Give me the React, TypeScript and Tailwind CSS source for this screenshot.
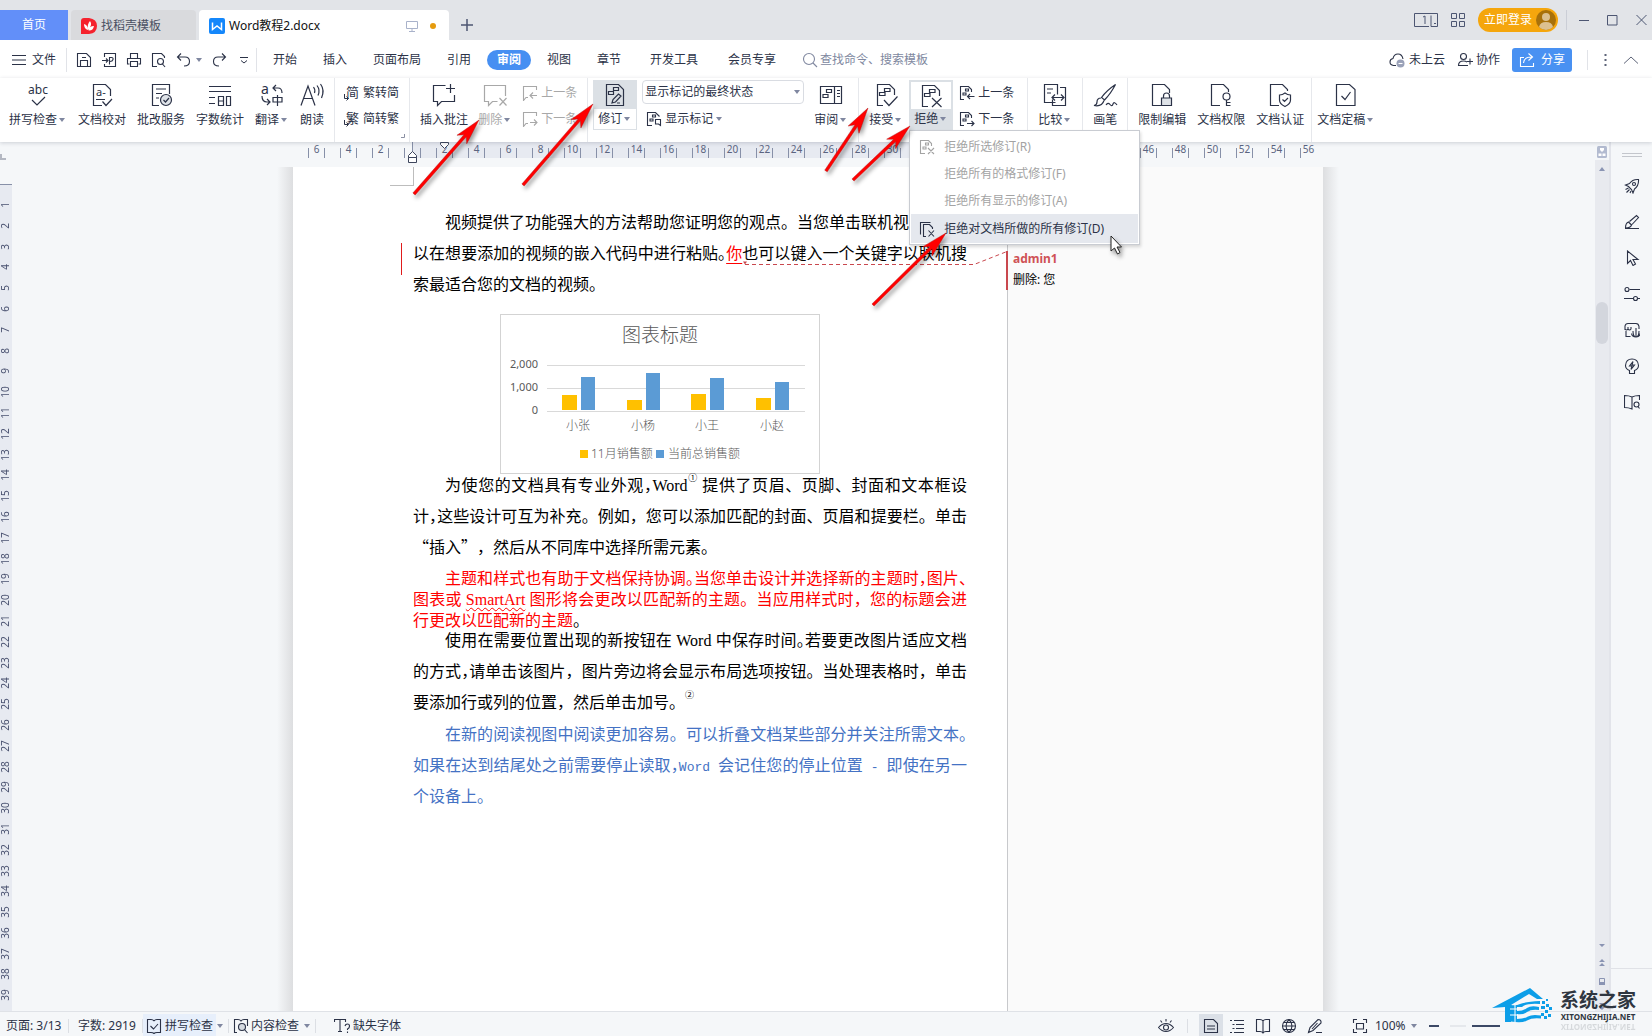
import type { ReactNode } from "react";

const ink = "#2b3247";

/* ---------- icons ---------- */

const docCut = "M9 22.5H3.5V1.5h12l5 5V12";
const marks = "M10.5 5.5h5.5v3h-5.5zM5.5 9.5H11v3H5.5z";

const big: Record<string, ReactNode> = {
  spell: (
    <>
      <text x="12" y="11" textAnchor="middle" fontSize="12" fill={ink} stroke="none">abc</text>
      <path d="M6 17l5 5 8-8" />
    </>
  ),
  proof: (
    <>
      <path d="M12 22.5H3.5V1.5h12l5 5V13M6 16.5h9M12.5 18.5l3.5 4 6-6.5" />
      <text x="6" y="13" fontSize="11" fill={ink} stroke="none">a-</text>
    </>
  ),
  correct: (
    <>
      <path d="M10 22.5H3.5V1.5h17V11M7 6h10M7 10.5h6M7 15h3" />
      <circle cx="17" cy="17" r="5.5" fill="#dfe3e8" />
      <path d="M14.5 17l2 2 3.5-4" />
    </>
  ),
  count: <path d="M1 3.5h22M1 8.5h22M1 14.5h6M1 20.5h6M10.5 13.5h5v9h-5zM10.5 18h5M18.5 13.5h4v9h-4z" />,
  translate: (
    <>
      <text x="1" y="11" fontSize="14" fill={ink} stroke="none">a</text>
      <path d="M16 2l-3 3 3 3M13 5h5q4 0 4 5M2 13q0 6 5 6h3M7 16l3 3-3 3M13 14.5h9v4.5h-9zM17.5 12v11" />
    </>
  ),
  read: <path d="M1 22.5L8 3l7 19.5M3.500 15.500h9M13.500 4q2 2.500 1 6M17 2.500q3.500 4.500 1 10M20.500 1q4.500 6 1 14" />,
  comment: <path d="M13.500 2.500h-12v16h4v4l4-4h13V12M18.500 1v9M14 5.500h9" />,
  delComment: <path d="M22.500 13V2.500h-21v16h4v4l4-4h5M16.500 15l7 7.500M23.500 15l-7 7.500" />,
  track: (
    <>
      <path d="M3.500 1.500h12l5 5v16h-17z" />
      <path d="M10.500 4.500h5v3h-5zM5.500 8.500h5v3h-5zM9 20l1-3.500 5.500-5.500 2.500 2-5.500 6zM14 20h3" />
    </>
  ),
  pane: <path d="M1.500 3.500h21v17h-21zM15.500 3.500v17M7.500 6.500h5v3h-5zM4 11.500h5v3H4zM18 7.500h3M18 10.500h3M18 13.500h3" />,
  accept: (
    <>
      <path d={docCut} />
      <path d={marks} />
      <path d="M10 17l5 5.500 8.500-9" />
    </>
  ),
  reject: (
    <>
      <path d={docCut} />
      <path d={marks} />
      <path d="M13 14l9.500 9M22.500 14l-9.500 9" />
    </>
  ),
  compare: <path d="M12.500 19.500h-11v-18h13v10M17 4.500h5.500v18h-13v-6M4 6h6M4 10h4M9 14.500h12M12 11.500l-3 3 3 3M18 11.500l3 3-3 3" />,
  brush: <path d="M22.500 1.500q-9 6-14 13l3 2.500q6-6 11-15.500zM8 15q-4 0-4 4 0 3-3 3.500 8 1.500 10-5M13 22q2-3 4-.5t3-.5 4 1" />,
  lock: (
    <>
      <path d="M11 22.500H2.500v-21h12l5 5V10" />
      <path d="M13.500 15v-2q0-3 3-3t3 3v2" />
      <path d="M11.500 15h10v7.500h-10z" fill="#dfe3e8" />
    </>
  ),
  key: (
    <>
      <path d="M11 22.500H2.500v-21h12l5 5V9" />
      <circle cx="17.500" cy="13.500" r="3.500" />
      <path d="M17.500 17v6M17.500 19.500h4M17.500 22.500h4" />
    </>
  ),
  shield: <path d="M11 22.500H2.500v-21h12l5 5V8M17 10q2.500 2 5.500 2v5q0 4-5.500 6.500-5.500-2.500-5.500-6.500v-5q3 0 5.500-2zM14.500 16.500l2 2 3.500-3.500" />,
  final: <path d="M2.500 1.500h13l5.500 5v16H2.500zM7.500 13l3.500 3.500L16.500 9" />,
};

const small: Record<string, ReactNode> = {
  save: <path d="M1.500 1.500h9l4 4v9h-13zM4.500 14V8.500h7V14M6 5.500h4" />,
  exportFile: <path d="M3.500 5V1.500h11v13h-11V12M1 8.500h6M5 6.500l2 2-2 2M8.500 12.500v-7h2q2 0 1.500 2T9 9.500" />,
  print: <path d="M4.500 6V1.500h7V6M3.500 12h-2V6.500h13V12h-2M4.500 9.500h7v5h-7z" />,
  preview: (
    <>
      <path d="M6 14.500H1.500v-13h9l3 3V6" />
      <circle cx="9.500" cy="9.500" r="3" />
      <path d="M11.500 12l2.500 3" />
    </>
  ),
  undo: <path d="M5 1.500L1.500 5 5 8.500M2 5h7q4.500 0 4.500 4.500T8 14" />,
  redo: <path d="M11 1.500L14.500 5 11 8.500M14 5H7q-4.500 0-4.500 4.500T8 14" />,
  search: (
    <>
      <circle cx="7" cy="7" r="5.500" />
      <path d="M11 11l4 4" />
    </>
  ),
  prev: <path d="M6 12.500H4l-2.500 3V1.500h13V5M15 10.500H8M11 7.500l-3 3 3 3" />,
  next: <path d="M6 12.500H4l-2.500 3V1.500h13V5M8 11.500h7M12 8.500l3 3-3 3" />,
  revPrev: <path d="M5 14.500H1.500v-13h8l3 3V7M6.500 4h3v2h-3zM4 8h3v2H4zM15.500 11.500H8.500M11 9l-2.500 2.500L11 14" />,
  revNext: <path d="M5 14.500H1.500v-13h8l3 3V7M6.500 4h3v2h-3zM4 8h3v2H4zM8 12.500h7M12.500 10l2.500 2.500-2.500 2.500" />,
  showMarks: <path d="M6 14.500H1.500v-13h8l4 4M6.500 4h3v2h-3zM4 8h3v2H4zM9.500 8.500h5v6l-2-1.500h-3z" />,
  rejectSel: <path d="M6 14.500H1.500v-13h8l3 3V7M6.500 4h3v2h-3zM4 8h3v2H4zM9 9l6 6M15 9l-6 6" />,
  rejectAll: <path d="M1.500 13.500v-12h10M7 15.500H4.500v-12h6l3 3V8M9.500 9.500l5.500 6M15 9.500l-5.500 6" />,
  cloud: (
    <>
      <path d="M7 13.500H4.500Q1 13 1 10t3-3.500Q5 2 9 2t5 5" />
      <circle cx="11.500" cy="11.500" r="4" fill="#9aa1b8" stroke="none" />
      <path d="M9.500 11.500h4" stroke="#fff" />
    </>
  ),
  person: (
    <>
      <circle cx="6.500" cy="4.500" r="3" />
      <path d="M11 13.500H1.500q0-4.500 5-4.500 2 0 3.500 1M13 6.500v6M10 9.500h6" />
    </>
  ),
  share: <path d="M5 5.500H1.500v9h13V11M4.500 11q.5-6 8-6M9.500 1.500L13.500 5 9.500 8.500" />,
  checkBook: <path d="M8 3Q7 1.500 5 1.500H1.500v13H5q2 0 3 1 1-1 3-1h3.500v-13H11Q9 1.500 8 3M4.500 8l3 3L12 6" />,
  findBook: (
    <>
      <path d="M4 14.500H1.500v-13H5q2 0 3 1.500 1-1.500 3-1.500h3.500V8" />
      <circle cx="9" cy="9" r="3.500" fill="#d5dae1" />
      <path d="M11.500 11.500l3 3.500" />
    </>
  ),
  missingFont: <path d="M.500 4V1.500h11V4M6 1.500v12M4 13.500h4M11 8q.5-2 2.500-2t2 2-2 3v1M13.500 13.500v1.500" />,
  eye: (
    <>
      <path d="M.5 9.500Q4 5.500 8 5.500t7.500 4Q12 13.500 8 13.500T.5 9.500zM8 1v2.500M2.500 2.500l1.500 2M13.500 2.500l-1.500 2" />
      <circle cx="8" cy="9.500" r="2.500" />
    </>
  ),
  pageView: <path d="M1.500 1.500h9l4 4v9h-13zM4 8h8M4 11h8" />,
  outline: <path d="M1 2.500h2M5 2.500h10M3.500 6.500h2M7 6.500h8M3.500 10.500h2M7 10.500h8M1 14.500h2M5 14.500h10" />,
  book: <path d="M8 3Q7 1.500 5 1.500H1.500v12H5q2 0 3 1.500 1-1.500 3-1.500h3.500v-12H11Q9 1.500 8 3zM8 3v11" />,
  globe: (
    <>
      <circle cx="8" cy="8" r="6.500" />
      <path d="M1.500 8h13M8 1.500q-3 3-3 6.500t3 6.500M8 1.500q3 3 3 6.500t-3 6.500M3 4.500h10M3 11.500h10" />
    </>
  ),
  pen: <path d="M1.500 14.500l1.500-5L11 1.500q3.500 0 3 3.500L6 12.500l-4.500 2zM9 14.500h6M5 11l5.500-6" />,
  fit: <path d="M1.500 5V1.500H5M11 1.500h3.500V5M14.500 11v3.500H11M5 14.500H1.500V11M4.500 5.500h7v5.500h-7z" />,
  rocket: (
    <>
      <path d="M14.500 1.500q-6-.5-9 4L1.500 7l3 1.500 3 3L9 15l1.500-4q4.500-3.500 4-9.500z" />
      <circle cx="10" cy="6" r="1.500" />
      <path d="M4.500 10l-3 1.500M5.500 11.500l-3 3M7 13l-1 2" />
    </>
  ),
  pencilLine: <path d="M1 14.500h14M1.500 14q0-5 3-6l3 3q-1 3-6 3M5.500 7.500l7-6 2 2-6.500 7" />,
  pointer: <path d="M3.500 1v12.500l3-3 2.500 5 2.500-1.500-2.500-4.500h5z" />,
  sliders: (
    <>
      <path d="M5.500 3.500H16M0 12.500h9.500M13.500 12.500H16" />
      <circle cx="3" cy="3.500" r="2" />
      <circle cx="11.500" cy="12.500" r="2" />
    </>
  ),
  store: (
    <>
      <path d="M1 8V4q.5-2.500 3-2.500h8q2.500 0 3 3V7M1 7q1.500 2 3 0M4 5v2q1.500 2 3 0V5M2 9v5.500h4.500" />
      <path d="M12 6v9M9 9q0 6 3 6t3-6M7.500 11.500q.5 3.500 4.500 3.500t4-3.500" />
    </>
  ),
  bulb: <path d="M5.500 12.500v3h5v-3Q14.500 11 14.500 7.500 14 1 8 1T1.500 7.500Q1.500 11 5.500 12.500zM9 3.500L5.500 8H8l-1 3.500L10.500 7H8z" />,
  bookSearch: (
    <>
      <path d="M8 3Q5 1.500 .5 1.500v12q4 0 7.500 1.500V3q3-1.500 7.500-1.500V6" />
      <circle cx="12.500" cy="10.500" r="2.500" />
      <path d="M14 12.500l1.500 2" />
    </>
  ),
};

function Big({ name }: { name: string }) {
  return (
    <svg width="24" height="24" viewBox="0 0 24 24" fill="none" stroke="currentColor" strokeWidth="1.2" className="shrink-0 overflow-visible">
      {big[name]}
    </svg>
  );
}

function Small({ name }: { name: string }) {
  return (
    <svg width="16" height="16" viewBox="0 0 16 16" fill="none" stroke="currentColor" strokeWidth="1.1" className="shrink-0">
      {small[name]}
    </svg>
  );
}

function Caret() {
  return (
    <svg width="6" height="4" viewBox="0 0 6 4" fill="#7f87a0" className="shrink-0">
      <path d="M0 0h6L3 4z" />
    </svg>
  );
}

/* ---------- title bar ---------- */

function TitleBar() {
  return (
    <header className="flex h-10 shrink-0 items-end bg-[#e2e4e8]">
      <button className="h-[30px] w-[68px] bg-[#628ff9] text-white">首页</button>
      <button className="ml-[3px] flex h-[30px] w-[125px] items-center gap-1 rounded-t-sm bg-[#d9dadd] pl-[10px] pt-0.5 text-[#4a5062]">
        <svg width="16" height="16" viewBox="0 0 16 16">
          <path d="M0 3q0-3 3-3h5q8 1 8 8t-8 8H0z" fill="#f5222d" />
          <path d="M7 12Q3 11 3 6q4 1 4 6zM7 12q-1-6 2-9 3 4-2 9zM7.500 12.500Q8 8 13 8q-1 5-5.500 4.500z" fill="#fff" />
        </svg>
        找稻壳模板
      </button>
      <div className="ml-[3px] flex h-[30px] w-[250px] items-center rounded-t-sm bg-white pl-[10px] pt-0.5 text-[#111]">
        <svg width="16" height="16" viewBox="0 0 16 16">
          <rect width="16" height="16" rx="2" fill="#1487fb" />
          <path d="M3.500 4.500v7L8 8l4.500 3.500v-7" fill="none" stroke="#fff" strokeWidth="1.500" />
        </svg>
        <span className="ml-1 flex-1">Word教程2.docx</span>
        <svg width="12" height="12" viewBox="0 0 12 12" fill="none" stroke="#a9b2ca">
          <path d="M.5 1.500h11v7H.5zM6 8.500v3M3 11.500h6" />
        </svg>
        <span className="ml-3 mr-[13px] size-1.5 rounded-full bg-[#e59b0e]" />
      </div>
      <button className="ml-3 flex h-[30px] w-3 items-center" aria-label="新建">
        <svg width="12" height="12" viewBox="0 0 12 12" stroke="#4d5672" strokeWidth="1.500">
          <path d="M6 0v12M0 6h12" />
        </svg>
      </button>
      <div className="ml-auto flex h-10 items-center pr-[5px] text-[#4d5672]">
        <svg width="24" height="14" viewBox="0 0 24 14" fill="none" stroke="currentColor" className="mr-[13px]">
          <path d="M15 13.500H.5V.5h23M17 2.500v11h6.500V.5M20 10.500h2M9 4l2-1v8" />
        </svg>
        <svg width="14" height="14" viewBox="0 0 14 14" fill="none" stroke="currentColor" className="mr-[13px]">
          <path d="M.5.500h5v5h-5zM8.500.500h5v5h-5zM.5 8.500h5v5h-5zM8.500 8.500h5v5h-5z" />
        </svg>
        <button className="flex h-6 w-20 items-center justify-between rounded-full bg-[#f5a60d] pl-1.5 pr-0.5 text-white">
          立即登录
          <svg width="20" height="20" viewBox="0 0 20 20">
            <circle cx="10" cy="10" r="10" fill="#a8710b" />
            <circle cx="10" cy="7" r="4" fill="#dcc090" />
            <path d="M3 17q1-5 7-5t7 5q-3 3-7 3t-7-3z" fill="#dcc090" />
          </svg>
        </button>
        <span className="ml-2 mr-3 h-5 w-px bg-[#cbced6]" />
        <div className="flex gap-[18px]">
          <svg width="10" height="12" viewBox="0 0 10 12" stroke="currentColor"><path d="M0 6.500h10" /></svg>
          <svg width="11" height="12" viewBox="0 0 11 12" fill="none" stroke="currentColor"><path d="M.5 1.500h9.500V11H.5z" /></svg>
          <svg width="11" height="12" viewBox="0 0 11 12" stroke="currentColor"><path d="M.5 1l10 10M10.500 1l-10 10" /></svg>
        </div>
      </div>
    </header>
  );
}

/* ---------- menu row ---------- */

const tabs = ["开始", "插入", "页面布局", "引用", "审阅", "视图", "章节", "开发工具", "会员专享"];
const quick = ["save", "exportFile", "print", "preview", "undo"];

function tabWidth(t: string) {
  if (t === "审阅") return "mx-[3px] w-11 rounded-full bg-[#468ff2] font-bold text-white";
  if (t === "页面布局") return "w-[74px]";
  return t.length > 2 ? "ml-0.5 w-[76px]" : "w-[50px]";
}

function MenuBar() {
  return (
    <nav className="flex h-[38px] shrink-0 items-center bg-white px-3 pt-0.5">
      <button className="flex items-center gap-1.5">
        <svg width="14" height="10" viewBox="0 0 14 10" stroke="currentColor"><path d="M0 .5h14M0 5h14M0 9.500h14" /></svg>
        文件
      </button>
      <span className="ml-[10px] mr-1 h-6 w-px bg-[#e1e3e8]" />
      {quick.map((q) => (
        <button key={q} className="flex w-[25px] justify-center" aria-label={q}>
          <Small name={q} />
        </button>
      ))}
      <Caret />
      <button className="ml-1 flex w-[25px] justify-center" aria-label="redo"><Small name="redo" /></button>
      <button className="flex w-[25px] justify-center" aria-label="更多">
        <svg width="8" height="7" viewBox="0 0 8 7" fill="none" stroke="currentColor"><path d="M0 .5h8M1 3.500l3 2.500 3-2.500" /></svg>
      </button>
      <span className="mr-[3px] h-6 w-px bg-[#e1e3e8]" />
      {tabs.map((t) => (
        <button key={t} className={`flex h-5 items-center justify-center ${tabWidth(t)}`}>
          {t}
        </button>
      ))}
      <label className="ml-3 flex items-center gap-0.5 text-[#8088a0]">
        <Small name="search" />
        <input placeholder="查找命令、搜索模板" className="w-[130px] bg-transparent outline-none placeholder:text-[#8088a0]" />
      </label>
      <div className="ml-auto flex items-center">
        <button className="mr-3 flex items-center gap-1"><Small name="cloud" />未上云</button>
        <button className="mr-3 flex items-center gap-[3px]"><Small name="person" />协作</button>
        <button className="flex h-6 w-[60px] items-center justify-center gap-1.5 rounded-[3px] bg-[#4991f2] text-white">
          <Small name="share" />分享
        </button>
        <span className="ml-[15px] mr-4 h-5 w-px bg-[#e1e3e8]" />
        <svg width="3" height="12" viewBox="0 0 3 12" fill="#5d6478"><path d="M.5 0h2v2h-2zM.5 5h2v2h-2zM.5 10h2v2h-2z" /></svg>
        <svg width="16" height="8" viewBox="0 0 16 8" fill="none" stroke="#5d6478" className="ml-4 mr-px"><path d="M1 7.500l7-6.500 7 6.500" /></svg>
      </div>
    </nav>
  );
}

/* ---------- ribbon ---------- */

function Tool({ icon, label, caret, disabled }: { icon: string; label: string; caret?: boolean; disabled?: boolean }) {
  return (
    <button disabled={disabled} className="flex shrink-0 flex-col items-center gap-[5px] pt-[5px] disabled:text-[#a8a8a8]">
      <Big name={icon} />
      <span className="flex items-center">
        {label}
        {caret && <span className="flex w-[10px] justify-center"><Caret /></span>}
      </span>
    </button>
  );
}

function Row({ icon, label, disabled }: { icon: ReactNode; label: string; disabled?: boolean }) {
  return (
    <button disabled={disabled} className="flex h-[26px] items-center gap-[3px] disabled:text-[#a8a8a8]">
      {icon}
      {label}
    </button>
  );
}

function Convert({ char }: { char: string }) {
  return (
    <svg width="17" height="16" viewBox="0 0 17 16" fill="none" stroke="currentColor" className="overflow-visible">
      <text x="3" y="12" fontSize="13" fill="currentColor" stroke="none">{char}</text>
      <path d="M1.500 9v4.500H5M3.500 11.500l2 2-2 2" />
    </svg>
  );
}

function Ribbon() {
  return (
    <section className="relative z-10 flex h-16 shrink-0 bg-white shadow-[0_1px_4px_rgba(60,70,90,0.22)]">
      <div className="flex items-start gap-[11px] border-r border-[#e6e8ec] pl-[9px] pr-[10px]">
        <Tool icon="spell" label="拼写检查" caret />
        <Tool icon="proof" label="文档校对" />
        <Tool icon="correct" label="批改服务" />
        <Tool icon="count" label="字数统计" />
        <Tool icon="translate" label="翻译" caret />
        <Tool icon="read" label="朗读" />
      </div>
      <div className="relative flex flex-col border-r border-[#e6e8ec] pl-2 pr-[10px] pt-0.5">
        <Row icon={<Convert char="简" />} label="繁转简" />
        <Row icon={<Convert char="繁" />} label="简转繁" />
        <svg width="4" height="4" viewBox="0 0 4 4" fill="none" stroke="#8b90a3" className="absolute bottom-1 right-1"><path d="M3.500 0v3.500H0" /></svg>
      </div>
      <div className="flex items-start gap-[10px] border-r border-[#e6e8ec] px-[10px]">
        <Tool icon="comment" label="插入批注" />
        <Tool icon="delComment" label="删除" caret disabled />
        <div className="flex flex-col pt-0.5">
          <Row icon={<Small name="prev" />} label="上一条" disabled />
          <Row icon={<Small name="next" />} label="下一条" disabled />
        </div>
      </div>
      <div className="flex items-start border-r border-[#e6e8ec] px-[5px]">
        <button className="mt-0.5 flex h-[50px] w-11 flex-col items-center border border-[#dbe0e5] bg-white">
          <span className="flex h-[28px] w-full items-center justify-center bg-[#dbe0e5]"><Big name="track" /></span>
          <span className="flex flex-1 items-center">修订<span className="flex w-[10px] justify-center"><Caret /></span></span>
        </button>
        <div className="ml-[5px] flex w-[162px] flex-col pt-0.5">
          <div className="relative flex h-6 items-center">
            <select aria-label="显示状态" className="h-6 w-full appearance-none rounded-sm border border-[#d9dce2] bg-white pl-0.5">
              <option>显示标记的最终状态</option>
            </select>
            <span className="pointer-events-none absolute right-1"><Caret /></span>
          </div>
          <button className="ml-1 mt-[7px] flex items-center gap-[3px]">
            <Small name="showMarks" />
            显示标记
            <Caret />
          </button>
        </div>
        <div className="ml-[10px] mr-[5px]"><Tool icon="pane" label="审阅" caret /></div>
      </div>
      <div className="flex items-start gap-1.5 border-r border-[#e6e8ec] pl-[10px] pr-[13px]">
        <Tool icon="accept" label="接受" caret />
        <div className="relative">
          <button className="mt-0.5 flex h-[50px] w-11 flex-col items-center border-2 border-[#dbe0e5] bg-[#dbe0e5]">
            <span className="flex h-[27px] w-full items-center justify-center bg-white"><Big name="reject" /></span>
            <span className="flex flex-1 items-center">拒绝<span className="flex w-[10px] justify-center"><Caret /></span></span>
          </button>
          <RejectMenu />
        </div>
        <div className="flex flex-col pt-0.5">
          <Row icon={<Small name="revPrev" />} label="上一条" />
          <Row icon={<Small name="revNext" />} label="下一条" />
        </div>
      </div>
      <div className="flex border-r border-[#e6e8ec] px-[10px]"><Tool icon="compare" label="比较" caret /></div>
      <div className="flex border-r border-[#e6e8ec] px-[10px]"><Tool icon="brush" label="画笔" /></div>
      <div className="flex gap-[11px] border-r border-[#e6e8ec] pl-[10px] pr-[7px]">
        <Tool icon="lock" label="限制编辑" />
        <Tool icon="key" label="文档权限" />
        <Tool icon="shield" label="文档认证" />
      </div>
      <div className="flex pl-[5px]"><Tool icon="final" label="文档定稿" caret /></div>
    </section>
  );
}

function RejectMenu() {
  return (
    <div role="menu" className="absolute left-0 top-[52px] flex w-[231px] flex-col border border-[#c9ccd2] bg-white p-px shadow-[1px_2px_3px_rgba(0,0,0,0.15)]">
      <button disabled className="flex h-7 items-center gap-[9px] pl-2 pt-px text-[#a3a3a3]"><Small name="rejectSel" />拒绝所选修订(R)</button>
      <button disabled className="flex h-[27px] items-center pl-[33px] text-[#a3a3a3]">拒绝所有的格式修订(F)</button>
      <button disabled className="flex h-[27px] items-center pl-[33px] text-[#a3a3a3]">拒绝所有显示的修订(A)</button>
      <button className="flex h-[29px] items-center gap-[9px] bg-[#e5e8ee] pl-2"><Small name="rejectAll" />拒绝对文档所做的所有修订(D)</button>
    </div>
  );
}

/* ---------- rulers ---------- */

const rulerCells = [6, 4, 2, 0, ...Array.from({ length: 27 }, (_, i) => i * 2 + 2)];

// the open menu covers 32 to 44, zero has no label
function rulerLabel(n: number, i: number) {
  return n === 0 || (i > 3 && n > 30 && n < 46) ? "" : n;
}

function TopRuler() {
  return (
    <div className="relative flex h-[25px] shrink-0 text-[10px] leading-none text-[#5b6480]">
      <span className="mt-3 h-1.5 w-1.5 border-b-2 border-l-2 border-[#b4b8c2]" />
      <span className="absolute left-[412px] top-0 h-4 w-[554px] border-l border-[#8790a8] bg-[#e7eaf1]" />
      <div className="relative ml-[302px] flex h-4">
        {rulerCells.map((n, i) => (
          <div key={i} className="relative flex w-8 items-end">
            <span className="h-[10px] w-px bg-[#8790a8]" />
            <span className="w-[15px] pb-1 text-center">{rulerLabel(n, i)}</span>
            <span className="h-[10px] w-px bg-[#8790a8]" />
          </div>
        ))}
        <span className="mt-1.5 h-[10px] w-px bg-[#8790a8]" />
        <span className="w-[15px] pt-0.5 text-center">56</span>
      </div>
      <svg width="50" height="24" viewBox="0 0 50 24" fill="#fff" stroke="#3d455c" className="absolute left-[400px] top-0">
        <path d="M40.500.500h8v2l-4 4-4-4z" />
        <path d="M8.500 15.500v-2l4-4 4 4v2zM8.500 15.500h8v5h-8z" />
      </svg>
    </div>
  );
}

function SideRuler() {
  return (
    <div className="flex w-3 shrink-0 flex-col pt-[17px] text-[10px] leading-none text-[#4a5270]">
      <div className="flex flex-1 flex-col border-t border-[#8790a8] bg-[#e7eaf1] pb-[5px] pr-0.5 pt-[10px]">
        {Array.from({ length: 39 }, (_, i) => (
          <span key={i} className="flex flex-1 rotate-180 items-center justify-center [writing-mode:vertical-rl]">
            {i + 1}
          </span>
        ))}
      </div>
    </div>
  );
}

/* ---------- document ---------- */

function Line({ children, indent, full, tight }: { children: ReactNode; indent?: boolean; full?: boolean; tight?: boolean }) {
  return (
    <span
      className={`block whitespace-nowrap ${tight ? "h-[21px] leading-[21px]" : "h-[31px] leading-[31px]"} ${indent ? "ml-8" : ""} ${
        full ? "[text-align-last:justify]" : ""
      }`}
    >
      {children}
    </span>
  );
}

// half-width punctuation
const H = ({ children }: { children: string }) => (
  <span className="[font-feature-settings:'halt']">{children}</span>
);

const Latin = ({ children }: { children: ReactNode }) => (
  <span className="font-['Liberation_Serif',serif]">{children}</span>
);

const Note = ({ children }: { children: string }) => (
  <sup className="align-[6px] font-['Noto_Sans_CJK_SC',sans-serif] text-[9px] leading-none">{children}</sup>
);

const people = [
  { name: "小张", x: 78, a: 15, b: 33 },
  { name: "小杨", x: 143, a: 10, b: 37 },
  { name: "小王", x: 207, a: 16, b: 32 },
  { name: "小赵", x: 272, a: 12, b: 28 },
];

function Chart() {
  return (
    <svg width="320" height="160" viewBox="0 0 320 160" className="block font-['Noto_Sans','Noto_Sans_CJK_SC',sans-serif]" fill="#595959" fontSize="12">
      <rect x=".5" y=".5" width="319" height="159" fill="#fff" stroke="#d3d3d3" />
      <text x="160" y="28" fontSize="19" fontWeight="300" textAnchor="middle">图表标题</text>
      <g stroke="#d9d9d9">
        <path d="M47 51.500h258M47 74.500h258M47 97.500h258" />
      </g>
      <g fontSize="11" textAnchor="end">
        <text x="38" y="54">2,000</text>
        <text x="38" y="77">1,000</text>
        <text x="38" y="100">0</text>
      </g>
      {people.map((p) => (
        <g key={p.name}>
          <rect x={p.x - 16} y={96 - p.a} width="15" height={p.a} fill="#ffc000" />
          <rect x={p.x + 3} y={96 - p.b} width="14" height={p.b} fill="#5b9bd5" />
          <text x={p.x} y="116" textAnchor="middle" fontWeight="300">{p.name}</text>
        </g>
      ))}
      <rect x="80" y="136" width="8" height="8" fill="#ffc000" />
      <text x="91" y="144" fontWeight="300">11月销售额</text>
      <rect x="156" y="136" width="8" height="8" fill="#5b9bd5" />
      <text x="168" y="144" fontWeight="300">当前总销售额</text>
    </svg>
  );
}

function Document() {
  return (
    <article lang="zh-CN" className="relative flex w-[1030px] shrink-0">
      <div className="w-[714px] bg-white pl-[120px] pr-10 pt-[39px] font-['Noto_Sans_CJK_SC',sans-serif] text-[16px] font-normal text-black [text-spacing-trim:space-all]">
        <span className="absolute left-[97px] top-0 h-[19px] w-6 border-b border-r border-[#bdbdbd]" />
        <p>
          <Line indent>视频提供了功能强大的方法帮助您证明您的观点。当您单击联机视频</Line>
          <Line full>
            以在想要添加的视频的嵌入代码中进行粘贴<H>。</H>
            <ins className="text-[#ff0000] underline underline-offset-4">你</ins>也可以键入一个关键字以联机搜
          </Line>
          <Line>索最适合您的文档的视频。</Line>
        </p>
        <div className="-mb-[5px] ml-[87px] mt-[15px]"><Chart /></div>
        <p>
          <Line indent full>
            为使您的文档具有专业外观<H>，</H><Latin>Word<Note>①</Note> </Latin>提供了页眉、页脚、封面和文本框设
          </Line>
          <Line full>计<H>，</H>这些设计可互为补充。例如，您可以添加匹配的封面、页眉和提要栏。单击</Line>
          <Line>“插入”，然后从不同库中选择所需元素。</Line>
        </p>
        <p className="-mb-1.5 mt-[5px] text-[#ff0000]">
          <Line indent full tight>主题和样式也有助于文档保持协调<H>。</H>当您单击设计并选择新的主题时<H>，</H>图片<H>、</H></Line>
          <Line full tight>
            图表或<Latin> <span className="underline decoration-[#ff0000] decoration-wavy decoration-1 underline-offset-2">SmartArt</span> </Latin>图形将会更改以匹配新的主题。当应用样式时，您的标题会进
          </Line>
          <Line tight>行更改以匹配新的主题<span className="text-black">。</span></Line>
        </p>
        <p>
          <Line indent full>使用在需要位置出现的新按钮在<Latin> Word </Latin>中保存时间<H>。</H>若要更改图片适应文档</Line>
          <Line full>的方式<H>，</H>请单击该图片，图片旁边将会显示布局选项按钮。当处理表格时，单击</Line>
          <Line>要添加行或列的位置，然后单击加号。<Note>②</Note></Line>
        </p>
        <p className="pt-px text-[#4472c4]">
          <Line indent full>在新的阅读视图中阅读更加容易。可以折叠文档某些部分并关注所需文本<H>。</H></Line>
          <Line full>
            如果在达到结尾处之前需要停止读取<H>，</H>
            <span className="font-['Liberation_Mono',monospace] text-[13px]">Word </span>会记住您的停止位置
            <span className="font-['Liberation_Mono',monospace] text-[13px]"> - </span>即使在另一
          </Line>
          <Line>个设备上。</Line>
        </p>
      </div>
      <aside className="flex-1 border-l border-[#c8c9cc] bg-[#fafafa] pl-[5px] pt-[81px] leading-[21px] text-black">
        <p className="font-bold text-[#cf5256]">admin1</p>
        <p>删除: 您</p>
      </aside>
      {/* revision bar and balloon connector */}
      <svg width="720" height="130" viewBox="0 0 720 130" fill="none" className="absolute left-0 top-0">
        <path d="M108.500 76v32" stroke="#e01b1b" />
        <path d="M450 94.500h4l-2 3z" fill="#c9484e" />
        <path d="M452 97.500h229l33-13" stroke="#c9484e" strokeDasharray="4 3" />
        <path d="M714 84v39" stroke="#c9484e" strokeWidth="2" />
      </svg>
    </article>
  );
}

/* ---------- right side ---------- */

const sideTools = ["rocket", "pencilLine", "pointer", "sliders", "store", "bulb", "bookSearch"];

function ScrollBar() {
  return (
    <div className="flex w-[14px] shrink-0 flex-col items-center">
      <svg width="10" height="12" viewBox="0 0 10 12" className="mb-0.5 mt-1 shrink-0">
        <rect width="10" height="12" rx="1.500" fill="#b3bbd0" />
        <path d="M3 2h4v2L5 6 3 4zM1.500 7.500h3V10h-3zM5.500 7.500h3V10h-3z" fill="#fff" />
      </svg>
      <div className="flex w-full flex-1 flex-col items-center bg-[#e8eaef] pt-[7px]">
        <svg width="6" height="4" viewBox="0 0 6 4" fill="#8a94b3"><path d="M0 4h6L3 0z" /></svg>
        <span className="mt-[131px] h-[42px] w-3 rounded-full bg-[#d3d6dd]" />
        <svg width="8" height="70" viewBox="0 0 8 70" fill="#8a94b3" className="mt-auto">
          <path d="M1 3h6L4 6zM1 21h6L4 18zM1 25h6l-3-3zM1 62h6l-3 3zM1 66h6l-3 3z" />
          <path d="M1.500 37.500h5v6h-5z" fill="none" stroke="#8a94b3" />
          <path d="M1 41h6v3H1z" />
        </svg>
      </div>
    </div>
  );
}

function SidePanel() {
  return (
    <aside className="flex w-[43px] shrink-0 flex-col items-center border-l-2 border-[#e2e4ea] pt-[11px]">
      <span className="h-1 w-5 border-y border-[#c3c6cc]" />
      <div className="mt-[21px] flex flex-col gap-5">
        {sideTools.map((t) => (
          <button key={t} aria-label={t}><Small name={t} /></button>
        ))}
      </div>
      <span className="mt-auto h-[43px] w-full border-t border-[#e0e2e7]" />
    </aside>
  );
}

/* ---------- status bar ---------- */

const Sep = () => <span className="h-3.5 w-px bg-[#dcdfe4]" />;

function StatusBar() {
  return (
    <footer className="flex h-[25px] shrink-0 border-t border-[#dfe2e7] bg-[#f5f7f9] pt-px">
      <div className="flex h-[25px] w-full shrink-0 items-center pl-1.5 pt-px">
        <span className="w-[62px]">页面: 3/13</span>
        <Sep />
        <span className="ml-[9px] w-[64px]">字数: 2919</span>
        <Sep />
        <button className="flex h-full w-[73px] items-center gap-[3px] bg-[#e7effb] pl-[3px]"><Small name="checkBook" />拼写检查</button>
        <span className="ml-px mr-[5px]"><Caret /></span>
        <Sep />
        <button className="ml-1 flex items-center gap-0.5"><Small name="findBook" />内容检查</button>
        <span className="ml-[5px] mr-[5px]"><Caret /></span>
        <Sep />
        <button className="ml-[18px] flex items-center gap-[3px]"><Small name="missingFont" />缺失字体</button>
        <div className="ml-auto flex h-full items-center pr-[151px]">
          <button aria-label="护眼" className="mr-[13px]"><Small name="eye" /></button>
          <Sep />
          <button aria-label="页面视图" className="ml-[11px] flex h-full w-6 items-center justify-center bg-[#dbe0e7]"><Small name="pageView" /></button>
          <div className="ml-1.5 flex gap-[10px]">
            {["outline", "book", "globe", "pen"].map((v) => (
              <button key={v} aria-label={v}><Small name={v} /></button>
            ))}
          </div>
          <span className="ml-3.5"><Sep /></span>
          <button aria-label="最佳显示" className="ml-[15px] mr-[7px]"><Small name="fit" /></button>
          <span className="w-[34px]">100%</span>
          <span className="ml-0.5"><Caret /></span>
          <svg width="72" height="6" viewBox="0 0 72 6" className="ml-3">
            <path d="M0 2h10v2H0zM43 2h28v2H43z" fill="#3c4966" />
            <path d="M21 2.500h16v1H21z" fill="#d5d8df" />
          </svg>
        </div>
      </div>
    </footer>
  );
}

/* ---------- annotations ---------- */

const arrows = [
  [414, 194, 479, 120],
  [523, 185, 593, 104],
  [826, 171, 868, 108],
  [853, 180, 910, 126],
  [873, 305, 946, 233],
];

function Annotations() {
  return (
    <svg width="1140" height="320" viewBox="0 0 1140 320" className="pointer-events-none absolute left-0 top-0 z-20 drop-shadow-[2px_3px_2px_rgba(0,0,0,0.4)]">
      {arrows.map(([x1, y1, x2, y2]) => {
        const len = Math.hypot(x2 - x1, y2 - y1);
        const deg = (Math.atan2(y2 - y1, x2 - x1) * 180) / Math.PI;
        return (
          <g key={x1} transform={`translate(${x1} ${y1}) rotate(${deg})`} fill="#ff0000" stroke="#b01010" strokeWidth=".4">
            <path d={`M0 -1.500H${len - 21}L${len - 26} -6.500 ${len} 0 ${len - 26} 6.500 ${len - 21} 1.500H0z`} />
          </g>
        );
      })}
      <path d="M1111 236v15l3.500-3 3 6 2.500-1.500-3-5.500h4.500z" fill="#fff" stroke="#222" />
    </svg>
  );
}

function Watermark() {
  return (
    <div className="pointer-events-none absolute bottom-0 right-4 z-20 flex h-12 items-start gap-2">
      <svg width="60" height="36" viewBox="0 0 60 36" fill="#0c9ee8">
        <path d="M0 20L38 0l13 11h-6l-8-5-18 11v17h-6V19z" />
        <path d="M19 17q5 1 9-1t20-3v3q-14-1-18 3h-5v4q6 0 10-3t12-1v3q-8-1-12 2t-10 2v5q7 0 11-2.500t13-1v3q-9-1-14 2t-16 1z" />
        <path d="M50 13h3v3h-3zM54 11h2v2h-2zM54 16h3v3h-3zM49 18h4v3h-4zM57 19h3v3h-3zM53 22h3v3h-3zM49 25h3v3h-3zM56 26h3v3h-3zM52 28h3v3h-3z" />
        <path d="M18 21h8M18 27h8M23 17v17" stroke="#fff" />
      </svg>
      <div className="flex flex-col items-center text-[#2f3640]">
        <span className="font-['Noto_Sans_CJK_SC',sans-serif] text-[19px] font-bold leading-[22px]">系统之家</span>
        <span className="mt-0.5 text-[8px] font-bold leading-[10px]">XITONGZHIJIA.NET</span>
        <span aria-hidden="true" className="scale-y-[-1] text-[8px] font-bold leading-[10px] opacity-15">XITONGZHIJIA.NET</span>
      </div>
    </div>
  );
}

export default function App() {
  return (
    <div className="relative flex h-screen flex-col overflow-hidden bg-[#f5f7f9] font-['Noto_Sans','Noto_Sans_CJK_SC',sans-serif] text-[12px] leading-4 text-[#2b3247]">
      <TitleBar />
      <MenuBar />
      <Ribbon />
      <div className="flex min-h-0 flex-1">
        <main className="flex min-w-0 flex-1 flex-col overflow-hidden">
          <TopRuler />
          <div className="flex min-h-0 flex-1">
            <SideRuler />
            <span className="ml-[265px] w-4 shrink-0 bg-linear-to-r from-[#f5f7f9] to-[#dddee0]" />
            <Document />
            <span className="w-4 shrink-0 bg-linear-to-l from-[#f5f7f9] to-[#dddee0]" />
          </div>
        </main>
        <ScrollBar />
        <SidePanel />
      </div>
      <StatusBar />
      <Annotations />
      <Watermark />
    </div>
  );
}
